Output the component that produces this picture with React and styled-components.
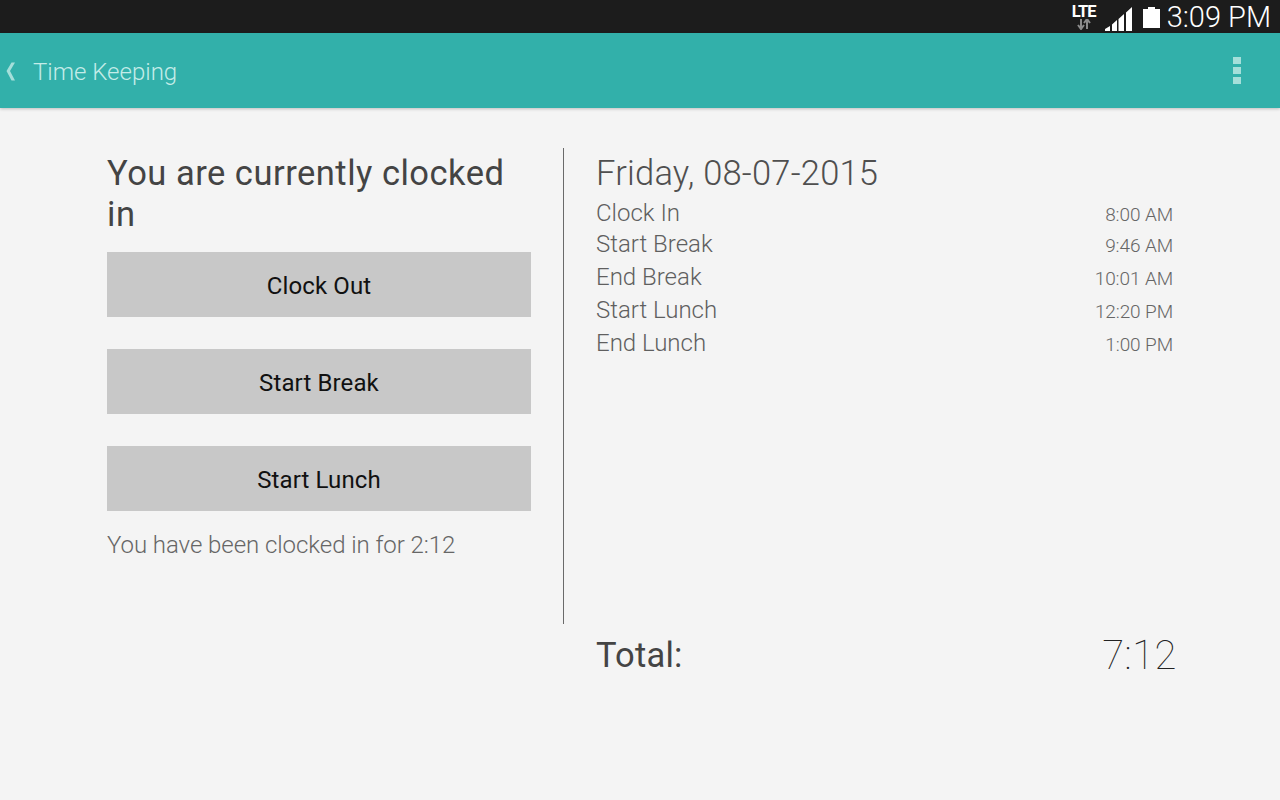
import React from "react";
import styled, { createGlobalStyle } from "styled-components";

const Global = createGlobalStyle`
  html, body { margin: 0; padding: 0; background: #f4f4f4; }
  body { font-family: Roboto, "Liberation Sans", sans-serif; }
`;
const Page = styled.div`
  width: 1280px; height: 800px; overflow: hidden; display: flex; flex-direction: column; background: #f4f4f4;
`;
const StatusBar = styled.div`
  height: 33px; flex: none; background: #1c1c1c; display: flex; align-items: center; justify-content: flex-end;
  padding-right: 9px; box-sizing: border-box;
`;
const NetworkBadge = styled.div`
  width: 25px; display: flex; flex-direction: column; align-items: center; margin-top: 1px;
`;
const NetworkText = styled.span`
  color: #fff; font-size: 16.5px; font-weight: 700; line-height: 14px; letter-spacing: -1px; margin-right: 1px;
`;
const SignalIcon = styled.svg`
  margin-left: 8px; margin-top: 5px;
`;
const BatteryIcon = styled.svg`
  margin-left: 11px; margin-top: 2px;
`;
const Clock = styled.span`
  color: #fff; font-size: 29px; font-weight: 300; line-height: 33px; margin: 2px 0 0 7px;
`;
const AppBar = styled.header`
  height: 75px; flex: none; background: #32b0aa; display: flex; align-items: center; position: relative;
  box-shadow: 0 1px 3px rgba(0,0,0,0.22); box-sizing: border-box; padding: 0 39px 0 5px; z-index: 1;
`;
const AppTitle = styled.h1`
  margin: 0 0 0 16px; padding-top: 4px; color: #c4ece8; font-size: 24px; font-weight: 300; line-height: 75px; flex: 1;
`;
const Main = styled.main`
  flex: 1; display: flex; padding: 40px 0 0 107px; align-items: flex-start;
`;
const LeftColumn = styled.section`
  width: 424px; flex: none; padding-top: 5px;
`;
const Heading = styled.h2`
  margin: 0 0 17px; font-size: 34.5px; line-height: 41px; font-weight: 400; color: #444; letter-spacing: 0.5px;
`;
const ActionButton = styled.button`
  display: block; width: 424px; height: 65px; border: 0; background: #c8c8c8; color: #111;
  font: 400 24px Roboto, sans-serif; letter-spacing: 0.12px; margin: 0 0 32px; padding: 2px 0 0;
`;
const Elapsed = styled.p`
  margin: -17px 0 0; font-size: 24px; line-height: 38px; font-weight: 300; color: #666; letter-spacing: -0.06px;
`;
const Divider = styled.div`
  width: 1px; height: 476px; background: #6a6a6a; margin: 0 32px; flex: none;
`;
const RightColumn = styled.section`
  width: 580px; flex: none; display: flex; flex-direction: column; height: 538px;
`;
const DateTitle = styled.h2`
  margin: 0; padding-top: 5px; font-size: 34.5px; line-height: 41px; font-weight: 300; color: #4f4f4f; letter-spacing: 0.22px;
`;
const Rows = styled.div`
  flex: 1; padding-top: 3px;
`;
const Row = styled.div`
  display: flex; justify-content: space-between; align-items: baseline; padding-right: 3px; height: ${p => p.$h}px; line-height: 33px;
`;
const RowLabel = styled.span`
  font-size: 24px; font-weight: 300; color: #5f5f5f;
`;
const RowTime = styled.span`
  font-size: 19px; font-weight: 300; color: #666; letter-spacing: -0.1px;
`;
const TotalRow = styled.div`
  display: flex; justify-content: space-between; align-items: center; height: 62px;
`;
const TotalLabel = styled.span`
  font-size: 34.5px; font-weight: 400; color: #444; letter-spacing: 0.2px;
`;
const TotalValue = styled.span`
  font-size: 40px; font-weight: 100; color: #222; letter-spacing: 0.5px; margin-right: -1px;
`;

const rows = [
  ["Clock In", "8:00 AM", 31],
  ["Start Break", "9:46 AM", 33],
  ["End Break", "10:01 AM", 33],
  ["Start Lunch", "12:20 PM", 33],
  ["End Lunch", "1:00 PM", 33],
];

const TransferArrows = () => (
  <svg width="14" height="11" viewBox="0 0 14 11" aria-hidden="true">
    <path d="M4 0v9M1 6l3 4 3-4M10 10V1M7 4l3-4 3 4" stroke="#8c8c8c" strokeWidth="2" fill="none" />
  </svg>
);

const Signal = () => (
  <SignalIcon width="27" height="24" viewBox="0 0 27 24" aria-hidden="true">
    <path d="M0 24h5v-5L0 22zM7 24h5V13l-5 4.500zM13.500 24H19V7l-5.500 5zM21 24h6V0l-6 5.500z" fill="#fff" />
  </SignalIcon>
);

const Battery = () => (
  <BatteryIcon width="17" height="21" viewBox="0 0 17 21" aria-hidden="true">
    <path d="M5 0h7v2h5v19H0V2h5z" fill="#fff" />
  </BatteryIcon>
);

const Chevron = () => (
  <svg width="12" height="20" viewBox="0 0 12 20" aria-hidden="true">
    <path d="M6.500 1.500H10L5 10l5 9.500H6.500L1.500 10z" fill="#a5dfda" />
  </svg>
);

const Overflow = () => (
  <svg width="8" height="28" viewBox="0 0 8 28" aria-hidden="true">
    <rect y="0" width="8" height="7" fill="#a5dfda" />
    <rect y="10" width="8" height="7" fill="#a5dfda" />
    <rect y="20" width="8" height="7" fill="#a5dfda" />
  </svg>
);

export default function App() {
  return (
    <Page>
      <Global />
      <StatusBar>
        <NetworkBadge>
          <NetworkText>LTE</NetworkText>
          <TransferArrows />
        </NetworkBadge>
        <Signal />
        <Battery />
        <Clock>3:09 PM</Clock>
      </StatusBar>
      <AppBar>
        <Chevron />
        <AppTitle>Time Keeping</AppTitle>
        <Overflow />
      </AppBar>
      <Main>
        <LeftColumn>
          <Heading>You are currently clocked in</Heading>
          <ActionButton>Clock Out</ActionButton>
          <ActionButton>Start Break</ActionButton>
          <ActionButton>Start Lunch</ActionButton>
          <Elapsed>You have been clocked in for 2:12</Elapsed>
        </LeftColumn>
        <Divider />
        <RightColumn>
          <DateTitle>Friday, 08-07-2015</DateTitle>
          <Rows>
            {rows.map(([label, time, h]) => (
              <Row key={label} $h={h}>
                <RowLabel>{label}</RowLabel>
                <RowTime>{time}</RowTime>
              </Row>
            ))}
          </Rows>
          <TotalRow>
            <TotalLabel>Total:</TotalLabel>
            <TotalValue>7:12</TotalValue>
          </TotalRow>
        </RightColumn>
      </Main>
    </Page>
  );
}
